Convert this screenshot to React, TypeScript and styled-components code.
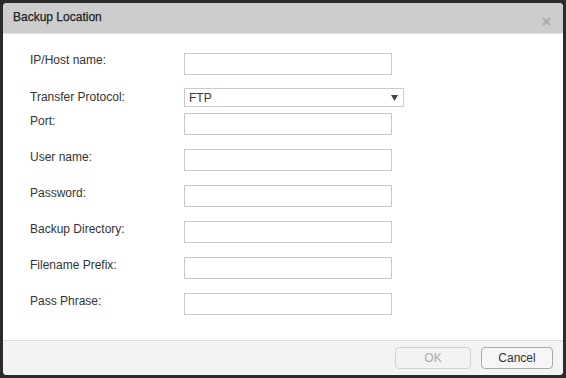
import React from "react";
import styled, { createGlobalStyle } from "styled-components";

const Global = createGlobalStyle`
  html, body { margin: 0; padding: 0; background: #2b2b2b; }
  body { font-family: "Liberation Sans", Arial, sans-serif; font-size: 12px; color: #333; }
  * { box-sizing: border-box; }
`;

const Stage = styled.div`
  width: 566px;
  height: 378px;
  padding: 3px;
  background: #2b2b2b;
`;

const Dialog = styled.div`
  width: 560px;
  height: 372px;
  background: #fff;
  border-radius: 4px;
  display: flex;
  flex-direction: column;
  overflow: hidden;
`;

const Header = styled.div`
  height: 31px;
  flex: none;
  background: #cdcdcd;
  border-bottom: 1px solid #e6e6e6;
  display: flex;
  align-items: center;
  justify-content: space-between;
  padding: 0 10px 0 10px;
`;

const Title = styled.div`
  font-size: 12px;
  color: #222;
  line-height: 14px;
  margin-top: -2px;
  -webkit-text-stroke: 0.25px #222;
`;

const Close = styled.button`
  border: 0;
  background: transparent;
  padding: 0;
  width: 12px;
  height: 12px;
  margin-top: 6px;
  margin-right: 1px;
  display: flex;
  align-items: center;
  justify-content: center;
  cursor: pointer;
`;

const Body = styled.div`
  flex: 1;
  padding: 19px 0 0 27px;
  display: flex;
  flex-direction: column;
`;

const Row = styled.div<{ $h: number }>`
  height: ${(p) => p.$h}px;
  display: grid;
  grid-template-columns: 154px auto;
  align-items: start;
`;

const Label = styled.label<{ $offset?: number }>`
  font-size: 12px;
  line-height: 14px;
  color: #333;
  padding-top: ${(p) => p.$offset ?? 0}px;
`;

const TextInput = styled.input`
  width: 208px;
  height: 22px;
  border: 1px solid #cbcbcb;
  background: #fff;
  padding: 0 4px;
  font: inherit;
  outline: none;
`;

const SelectWrap = styled.div`
  position: relative;
  width: 220px;
  height: 19px;
`;

const Select = styled.select`
  appearance: none;
  -webkit-appearance: none;
  width: 100%;
  height: 100%;
  border: 1px solid #cbcbcb;
  border-radius: 0;
  background: #fff;
  padding: 0 0 0 4px;
  font-family: "Liberation Sans", Arial, sans-serif;
  font-size: 12px;
  color: #333;
  outline: none;
`;

const Arrow = styled.svg`
  position: absolute;
  right: 6px;
  top: 7px;
  pointer-events: none;
`;

const Footer = styled.div`
  height: 35px;
  flex: none;
  background: #f3f3f3;
  border-top: 1px solid #dcdcdc;
  display: flex;
  justify-content: flex-end;
  align-items: flex-start;
  gap: 10px;
  padding: 6px 10px 0 0;
`;

const Button = styled.button<{ $disabled?: boolean }>`
  width: ${(p) => (p.$disabled ? 76 : 72)}px;
  height: 22px;
  border-radius: 4px;
  border: 1px solid ${(p) => (p.$disabled ? "#d2d2d2" : "#a9a9a9")};
  background: ${(p) => (p.$disabled ? "#f3f3f3" : "#f6f6f6")};
  color: ${(p) => (p.$disabled ? "#a8a8a8" : "#333")};
  font-family: "Liberation Sans", Arial, sans-serif;
  font-size: 12px;
  padding: 0;
  cursor: pointer;
`;

const fields: { label: string; type?: string }[] = [
  { label: "Port:" },
  { label: "User name:" },
  { label: "Password:", type: "password" },
  { label: "Backup Directory:" },
  { label: "Filename Prefix:" },
  { label: "Pass Phrase:", type: "password" },
];

export default function App() {
  return (
    <>
      <Global />
      <Stage>
        <Dialog>
          <Header>
            <Title>Backup Location</Title>
            <Close aria-label="Close">
              <svg width="9" height="9" viewBox="0 0 9 9">
                <path d="M1 1L8 8M8 1L1 8" stroke="#adadad" strokeWidth="2" />
              </svg>
            </Close>
          </Header>
          <Body>
            <Row $h={35}>
              <Label $offset={0}>IP/Host name:</Label>
              <TextInput />
            </Row>
            <Row $h={25}>
              <Label $offset={2}>Transfer Protocol:</Label>
              <SelectWrap>
                <Select defaultValue="FTP">
                  <option>FTP</option>
                  <option>SFTP</option>
                </Select>
                <Arrow width="7" height="6" viewBox="0 0 7 6">
                  <path d="M0 0H7L3.5 6Z" fill="#444" />
                </Arrow>
              </SelectWrap>
            </Row>
            {fields.map((f) => (
              <Row $h={36} key={f.label}>
                <Label $offset={1}>{f.label}</Label>
                <TextInput type={f.type ?? "text"} />
              </Row>
            ))}
          </Body>
          <Footer>
            <Button $disabled disabled>OK</Button>
            <Button>Cancel</Button>
          </Footer>
        </Dialog>
      </Stage>
    </>
  );
}
